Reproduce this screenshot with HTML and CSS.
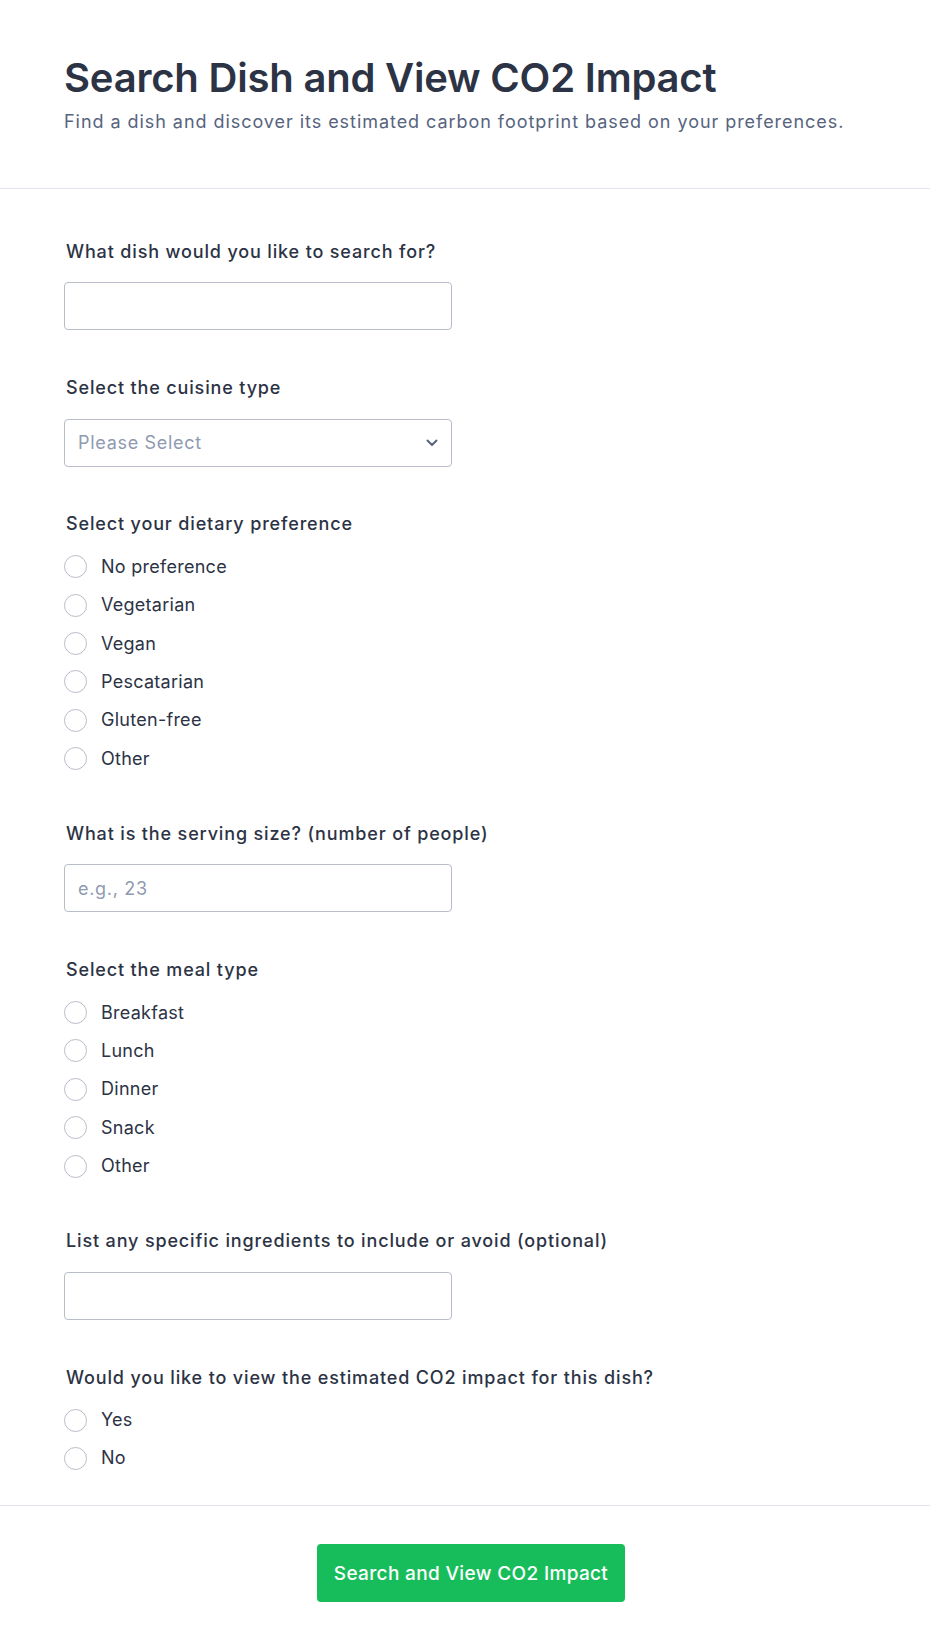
FILE: index.html
```html
<!DOCTYPE html>
<html lang="en">
<head>
<meta charset="utf-8">
<title>Search Dish and View CO2 Impact</title>
<link rel="stylesheet" href="styles.css">
</head>
<body>
<header class="page-header">
  <h1 class="title">Search Dish and View CO2 Impact</h1>
  <p class="subtitle">Find a dish and discover its estimated carbon footprint based on your preferences.</p>
</header>

<form class="form">
  <div class="field">
    <label class="field-label" for="dish">What dish would you like to search for?</label>
    <input class="text-input" id="dish" type="text">
  </div>

  <div class="field">
    <label class="field-label">Select the cuisine type</label>
    <div class="select-box">
      <span class="select-placeholder">Please Select</span>
      <svg class="chevron" width="12" height="8" viewBox="0 0 12 8"><path d="M1.5 1.5 L6 6 L10.5 1.5" fill="none" stroke="#57647e" stroke-width="2" stroke-linecap="round" stroke-linejoin="round"/></svg>
    </div>
  </div>

  <div class="field">
    <label class="field-label">Select your dietary preference</label>
    <div class="radio-list">
      <label class="radio-row"><input class="radio" type="radio" name="diet"><span>No preference</span></label>
      <label class="radio-row"><input class="radio" type="radio" name="diet"><span>Vegetarian</span></label>
      <label class="radio-row"><input class="radio" type="radio" name="diet"><span>Vegan</span></label>
      <label class="radio-row"><input class="radio" type="radio" name="diet"><span>Pescatarian</span></label>
      <label class="radio-row"><input class="radio" type="radio" name="diet"><span>Gluten-free</span></label>
      <label class="radio-row"><input class="radio" type="radio" name="diet"><span>Other</span></label>
    </div>
  </div>

  <div class="field">
    <label class="field-label" for="size">What is the serving size? (number of people)</label>
    <input class="text-input" id="size" type="text" placeholder="e.g., 23">
  </div>

  <div class="field">
    <label class="field-label">Select the meal type</label>
    <div class="radio-list">
      <label class="radio-row"><input class="radio" type="radio" name="meal"><span>Breakfast</span></label>
      <label class="radio-row"><input class="radio" type="radio" name="meal"><span>Lunch</span></label>
      <label class="radio-row"><input class="radio" type="radio" name="meal"><span>Dinner</span></label>
      <label class="radio-row"><input class="radio" type="radio" name="meal"><span>Snack</span></label>
      <label class="radio-row"><input class="radio" type="radio" name="meal"><span>Other</span></label>
    </div>
  </div>

  <div class="field">
    <label class="field-label" for="ingr">List any specific ingredients to include or avoid (optional)</label>
    <input class="text-input" id="ingr" type="text">
  </div>

  <div class="field">
    <label class="field-label">Would you like to view the estimated CO2 impact for this dish?</label>
    <div class="radio-list">
      <label class="radio-row"><input class="radio" type="radio" name="co2"><span>Yes</span></label>
      <label class="radio-row"><input class="radio" type="radio" name="co2"><span>No</span></label>
    </div>
  </div>
</form>

<footer class="page-footer">
  <button class="submit" type="button">Search and View CO2 Impact</button>
</footer>
</body>
</html>
```

FILE: styles.css
```css
* { box-sizing: border-box; }

html, body {
  margin: 0;
  padding: 0;
  background: #ffffff;
}

body {
  font-family: Inter, "Noto Sans", "Liberation Sans", sans-serif;
  color: #2c3345;
}

.page-header {
  padding: 54px 64px 53.5px 64px;
  border-bottom: 1px solid #e3e5ee;
}

.title {
  margin: 0;
  font-size: 40px;
  line-height: 48px;
  font-weight: 600;
  letter-spacing: -0.2px;
  color: #2c3345;
}

.subtitle {
  margin: 8.4px 0 0 0;
  font-size: 18px;
  line-height: 24px;
  letter-spacing: 0.95px;
  color: #57647e;
}

.form {
  padding: 51px 64px 29px 64px;
  display: flex;
  flex-direction: column;
  gap: 45.7px;
}

.field {
  display: flex;
  flex-direction: column;
  align-items: flex-start;
}

.field-label {
  display: block;
  margin: 0 0 18.5px 2px;
  font-size: 18px;
  line-height: 24px;
  font-weight: 500;
  letter-spacing: 0.85px;
  color: #2c3345;
}

.text-input {
  width: 388px;
  height: 48px;
  margin: 0;
  padding: 0 13px;
  border: 1px solid #b8bdc9;
  border-radius: 4px;
  font-family: inherit;
  font-size: 18px;
  letter-spacing: 0.7px;
  color: #2c3345;
  background: #fff;
  outline: none;
}

.text-input::placeholder {
  color: #8f9ab0;
}

.select-box {
  width: 388px;
  height: 48px;
  padding: 0 13px;
  border: 1px solid #b8bdc9;
  border-radius: 4px;
  display: flex;
  align-items: center;
  justify-content: space-between;
}

.select-placeholder {
  font-size: 18px;
  letter-spacing: 0.7px;
  color: #8f9ab0;
}

.chevron {
  display: block;
}

.radio-list {
  display: flex;
  flex-direction: column;
  gap: 14.4px;
  padding-bottom: 5.5px;
}

.radio-row {
  display: flex;
  align-items: center;
  gap: 14px;
  height: 24px;
  font-size: 18px;
  line-height: 24px;
  letter-spacing: 0.27px;
  color: #2c3345;
}

.radio {
  appearance: none;
  -webkit-appearance: none;
  margin: 0;
  width: 23px;
  height: 23px;
  border: 1px solid #b8bdc9;
  border-radius: 50%;
  background: #fff;
  flex: none;
}

.page-footer {
  border-top: 1px solid #e3e5ee;
  padding: 38.5px 52px 50px 64px;
  display: flex;
  justify-content: center;
}

.submit {
  height: 58px;
  padding: 0 17px;
  border: none;
  border-radius: 4px;
  background: #18bd5b;
  color: #ffffff;
  font-family: inherit;
  font-size: 19px;
  font-weight: 500;
  letter-spacing: 0.35px;
}
```
